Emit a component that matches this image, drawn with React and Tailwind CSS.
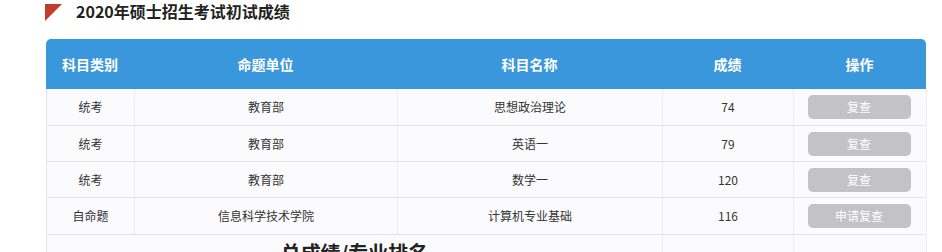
import React from "react";

const rows = [
  { type: "统考", unit: "教育部", name: "思想政治理论", score: "74", op: "复查", h: "h-[37px]" },
  { type: "统考", unit: "教育部", name: "英语一", score: "79", op: "复查", h: "h-[36px]" },
  { type: "统考", unit: "教育部", name: "数学一", score: "120", op: "复查", h: "h-[36px]" },
  { type: "自命题", unit: "信息科学技术学院", name: "计算机专业基础", score: "116", op: "申请复查", h: "h-[37px]" },
];

const font = { fontFamily: '"Noto Sans CJK SC", "Noto Sans", sans-serif' };

export default function App() {
  return (
    <div className="w-[942px] h-[252px] overflow-hidden bg-white" style={font}>
      <div className="flex items-center h-[22px] pl-[45px]">
        <svg width="17" height="17" viewBox="0 0 17 17" className="shrink-0 mt-[2px]">
          <polygon points="0,0 17,0 0,17" fill="#c43a2c" />
        </svg>
        <div className="ml-[14px] text-[16px] font-bold text-[#222] leading-none">2020年硕士招生考试初试成绩</div>
      </div>
      <div className="ml-[46px] mt-[17px] w-[880px]">
        <div className="grid grid-cols-[88px_263px_265px_131px_133px] h-[50px] bg-[#3a97dc] rounded-t-[5px] text-white text-[14px] font-bold">
          {["科目类别", "命题单位", "科目名称", "成绩", "操作"].map((t) => (
            <div key={t} className="flex items-center justify-center">{t}</div>
          ))}
        </div>
        <div className="border-l border-[#e4e4ea] bg-[#fbfbfd]">
          {rows.map((r, i) => (
            <div key={i} className={`grid grid-cols-[88px_263px_265px_131px_133px] ${r.h} border-b border-[#e2e2e8] text-[12px] text-[#333]`}>
              <div className="flex items-center justify-center border-r border-[#ececf1]">{r.type}</div>
              <div className="flex items-center justify-center border-r border-[#ececf1]">{r.unit}</div>
              <div className="flex items-center justify-center border-r border-[#ececf1]">{r.name}</div>
              <div className="flex items-center justify-center border-r border-[#ececf1]">{r.score}</div>
              <div className="flex items-center justify-center border-r border-[#ececf1]">
                <div className="w-[103px] h-[24px] ml-[-2px] rounded-[5px] bg-[#c3c2c7] text-white flex items-center justify-center">{r.op}</div>
              </div>
            </div>
          ))}
          <div className="grid grid-cols-[616px_131px_133px] h-[40px]">
            <div className="flex justify-center border-r border-[#ececf1] pt-[4px]">
              <span className="text-[20px] font-bold text-[#222] leading-[28px]">总成绩/专业排名</span>
            </div>
            <div className="border-r border-[#ececf1]"></div>
            <div className="border-r border-[#ececf1]"></div>
          </div>
        </div>
      </div>
    </div>
  );
}
